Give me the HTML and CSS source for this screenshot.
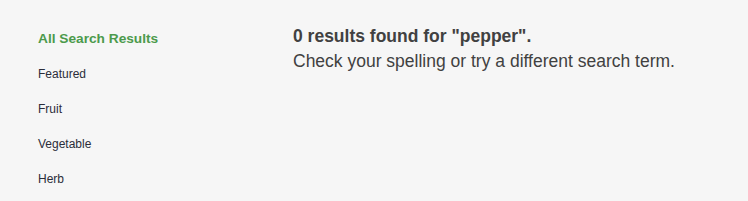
FILE: index.html
```html
<!DOCTYPE html>
<html lang="en">
<head>
    <meta charset="UTF-8">
    <title>Search Results</title>
    <link rel="stylesheet" href="styles.css">
</head>
<body>
    <div class="page">
        <ul class="categories">
            <li class="active">All Search Results</li>
            <li>Featured</li>
            <li>Fruit</li>
            <li>Vegetable</li>
            <li>Herb</li>
        </ul>
        <div class="results">
            <h2>0 results found for "pepper".</h2>
            <p>Check your spelling or try a different search term.</p>
        </div>
    </div>
</body>
</html>
```
FILE: styles.css
```css
body {
    margin: 0;
    background-color: #f6f6f6;
    font-family: "Liberation Sans", Arial, sans-serif;
}
.page {
    display: flex;
    padding: 0 0 0 38px;
}
.categories {
    list-style: none;
    margin: 0;
    padding: 22px 0 0 0;
    width: 255px;
}
.categories li {
    font-size: 12px;
    line-height: 35px;
    color: #2b2d3a;
}
.categories li.active {
    font-size: 13.7px;
    font-weight: bold;
    line-height: 33px;
    padding-bottom: 2px;
    color: #4c9a4c;
}
.results {
    padding-top: 24px;
    color: #414141;
}
.results h2 {
    margin: 0;
    font-size: 17.5px;
    line-height: 24.5px;
}
.results p {
    margin: 0;
    font-size: 17.5px;
    line-height: 24.5px;
}
```
